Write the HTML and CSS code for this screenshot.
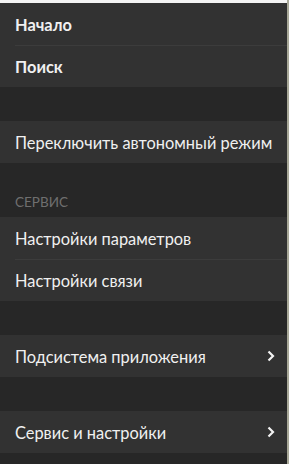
FILE: index.html
```html
<!DOCTYPE html>
<html lang="ru">
<head>
<meta charset="utf-8">
<link rel="stylesheet" href="styles.css">
</head>
<body>
<div class="screen">
  <div class="topbar"></div>
  <div class="menu">
    <div class="group">
      <div class="item bold"><span>Начало</span></div>
      <div class="item bold"><span>Поиск</span></div>
    </div>
    <div class="gap"></div>
    <div class="group">
      <div class="item"><span>Переключить автономный режим</span></div>
    </div>
    <div class="header">СЕРВИС</div>
    <div class="group">
      <div class="item"><span>Настройки параметров</span></div>
      <div class="item"><span>Настройки связи</span></div>
    </div>
    <div class="gap"></div>
    <div class="group">
      <div class="item"><span>Подсистема приложения</span>
        <svg class="chev" width="8" height="12" viewBox="0 0 8 12"><path d="M1.5 1.5 L6 6 L1.5 10.5" fill="none" stroke="#f2f2f2" stroke-width="2.2"/></svg>
      </div>
    </div>
    <div class="gap"></div>
    <div class="group">
      <div class="item"><span>Сервис и настройки</span>
        <svg class="chev" width="8" height="12" viewBox="0 0 8 12"><path d="M1.5 1.5 L6 6 L1.5 10.5" fill="none" stroke="#f2f2f2" stroke-width="2.2"/></svg>
      </div>
    </div>
  </div>
</div>
</body>
</html>
```
FILE: styles.css
```css
html, body {
  margin: 0;
  padding: 0;
  height: 100%;
  background: #272727;
}
.screen {
  display: flex;
  flex-direction: column;
  height: 464px;
  border-right: 2px solid #a8a898;
  box-sizing: border-box;
  background: #272727;
  font-family: "Lato", "Noto Sans", sans-serif;
}
.topbar {
  height: 3px;
  background: #f4f4f4;
}
.menu {
  display: flex;
  flex-direction: column;
}
.group {
  background: #323232;
  display: flex;
  flex-direction: column;
}
.item {
  height: 42px;
  display: flex;
  align-items: center;
  justify-content: space-between;
  margin-left: 15px;
  padding-right: 12px;
  color: #f0f0f0;
  font-size: 16.4px;
  box-sizing: border-box;
}
.item + .item {
  border-top: 1px solid #3c3c3c;
}
.bold {
  font-weight: 700;
}
.gap {
  height: 34px;
}
.header {
  height: 54px;
  display: flex;
  align-items: flex-end;
  padding: 0 0 7px 15px;
  box-sizing: border-box;
  color: #6f6f6f;
  font-size: 13.5px;
}
.chev {
  display: block;
}
```
